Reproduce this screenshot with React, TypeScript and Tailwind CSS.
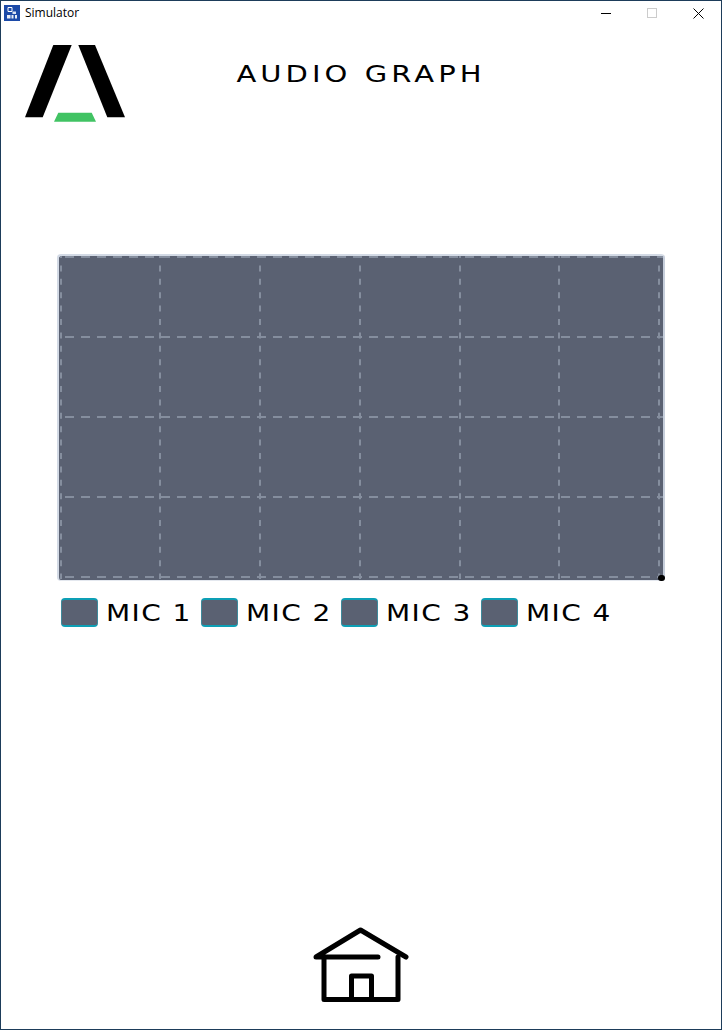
const mics = ['MIC 1', 'MIC 2', 'MIC 3', 'MIC 4'];
const verticals = [2, 101, 201, 301, 401, 500, 600];
const horizontals = [1, 81, 161, 241, 321];

function Logo() {
  return (
    <svg width="100" height="77" viewBox="0 0 100 77">
      <polygon points="28.3,0 46.7,0 17.7,72.3 0,72.3" fill="#000" />
      <polygon points="53.3,0 70,0 100,72.3 82.3,72.3" fill="#000" />
      <polygon points="33.3,67.7 66.7,67.7 71,76.7 29,76.7" fill="#41c363" />
    </svg>
  );
}

function HomeIcon() {
  return (
    <svg width="96" height="76" viewBox="0 0 96 76" fill="none" stroke="#000" strokeWidth="5" strokeLinejoin="round" strokeLinecap="round">
      <path d="M65 30 H3 L47.5 3 L93 30" />
      <path d="M11 30 V72.5 H85 V30" />
      <path d="M38.5 72 V49 H58.5 V72" />
    </svg>
  );
}

function AppIcon() {
  return (
    <svg width="16" height="16" viewBox="0 0 16 16">
      <rect width="16" height="16" fill="#1c4aa8" />
      <path d="M4 2.5 H8 V6.5 H4 Z" fill="none" stroke="#fff" strokeWidth="1" />
      <path d="M8.5 6.5 H12 V9 H8.5 Z" fill="#fff" opacity="0.85" />
      <path d="M3 10 H6.5 V13.5 H3 Z M7.5 10 H9.5 V13.5 H7.5 Z M11 10 H13 V13.5 H11 Z" fill="#fff" opacity="0.9" />
    </svg>
  );
}

function CloseIcon() {
  return (
    <svg width="11" height="11" viewBox="0 0 11 11" stroke="#000" strokeWidth="1">
      <line x1="0.5" y1="0.5" x2="10.5" y2="10.5" />
      <line x1="10.5" y1="0.5" x2="0.5" y2="10.5" />
    </svg>
  );
}

function Graph() {
  return (
    <div className="relative w-[608px] h-[327px] ml-[56px] rounded-[4px] bg-[#5a6172] border-2 border-b border-[#d3dae5] border-r-[#c6cedb] border-b-[#e4e8ef]">
      <svg className="block" width="604" height="324" viewBox="0 0 604 324" fill="none" stroke="#858e9e" strokeWidth="2">
        {verticals.map((x) => (
          <line key={x} x1={x} y1="0" x2={x} y2="323" strokeDasharray="6 7.4" strokeDashoffset="4" />
        ))}
        {horizontals.map((y) => (
          <line key={y} x1="0" y1={y} x2="604" y2={y} strokeDasharray="9 7" strokeDashoffset="10" />
        ))}
      </svg>
      <div className="absolute right-[-2px] bottom-[-1px] w-[7px] h-[6px] rounded-full bg-black" />
    </div>
  );
}

export default function App() {
  return (
    <div className="w-[722px] h-[1030px] flex flex-col bg-white border border-[#1d3c5a] overflow-hidden font-['Inter',sans-serif]">
      {/* Title bar */}
      <div className="h-[24px] flex items-center pl-[3px] shrink-0">
        <AppIcon />
        <span className="ml-[5px] text-[12px] text-black font-['Open_Sans',sans-serif]">Simulator</span>
        <div className="ml-auto flex items-center">
          <div className="w-[46px] flex justify-center"><div className="w-[10px] h-px bg-black" /></div>
          <div className="w-[46px] flex justify-center"><div className="w-[10px] h-[10px] border border-[#cccccc]" /></div>
          <div className="w-[46px] flex justify-center"><CloseIcon /></div>
        </div>
      </div>

      {/* Header */}
      <div className="relative h-[98px] shrink-0 pl-[24px] pt-[20px]">
        <Logo />
        <h1 className="absolute left-0 right-0 top-[34px] text-center text-[29px] leading-[30px] font-normal tracking-[0.14em] text-black font-['DejaVu_Sans',sans-serif] scale-y-[0.8]">
          AUDIO GRAPH
        </h1>
      </div>

      {/* Graph */}
      <div className="mt-[131px]">
        <Graph />
      </div>

      {/* Mic toggles */}
      <div className="flex mt-[17px] pl-[60px]">
        {mics.map((m) => (
          <div key={m} className="w-[140px] flex items-center">
            <div className="w-[37px] h-[29px] rounded-[4px] bg-[#5a6172] border-y-2 border-x border-y-[#0d9fb5] border-x-[#3e8a9c]" />
            <span className="ml-[8px] text-[28px] leading-[29px] tracking-[0.05em] text-black font-['DejaVu_Sans',sans-serif] scale-y-[0.85] whitespace-nowrap">{m}</span>
          </div>
        ))}
      </div>

      {/* Home */}
      <div className="mt-auto mb-[26px] flex justify-center">
        <HomeIcon />
      </div>
    </div>
  );
}
